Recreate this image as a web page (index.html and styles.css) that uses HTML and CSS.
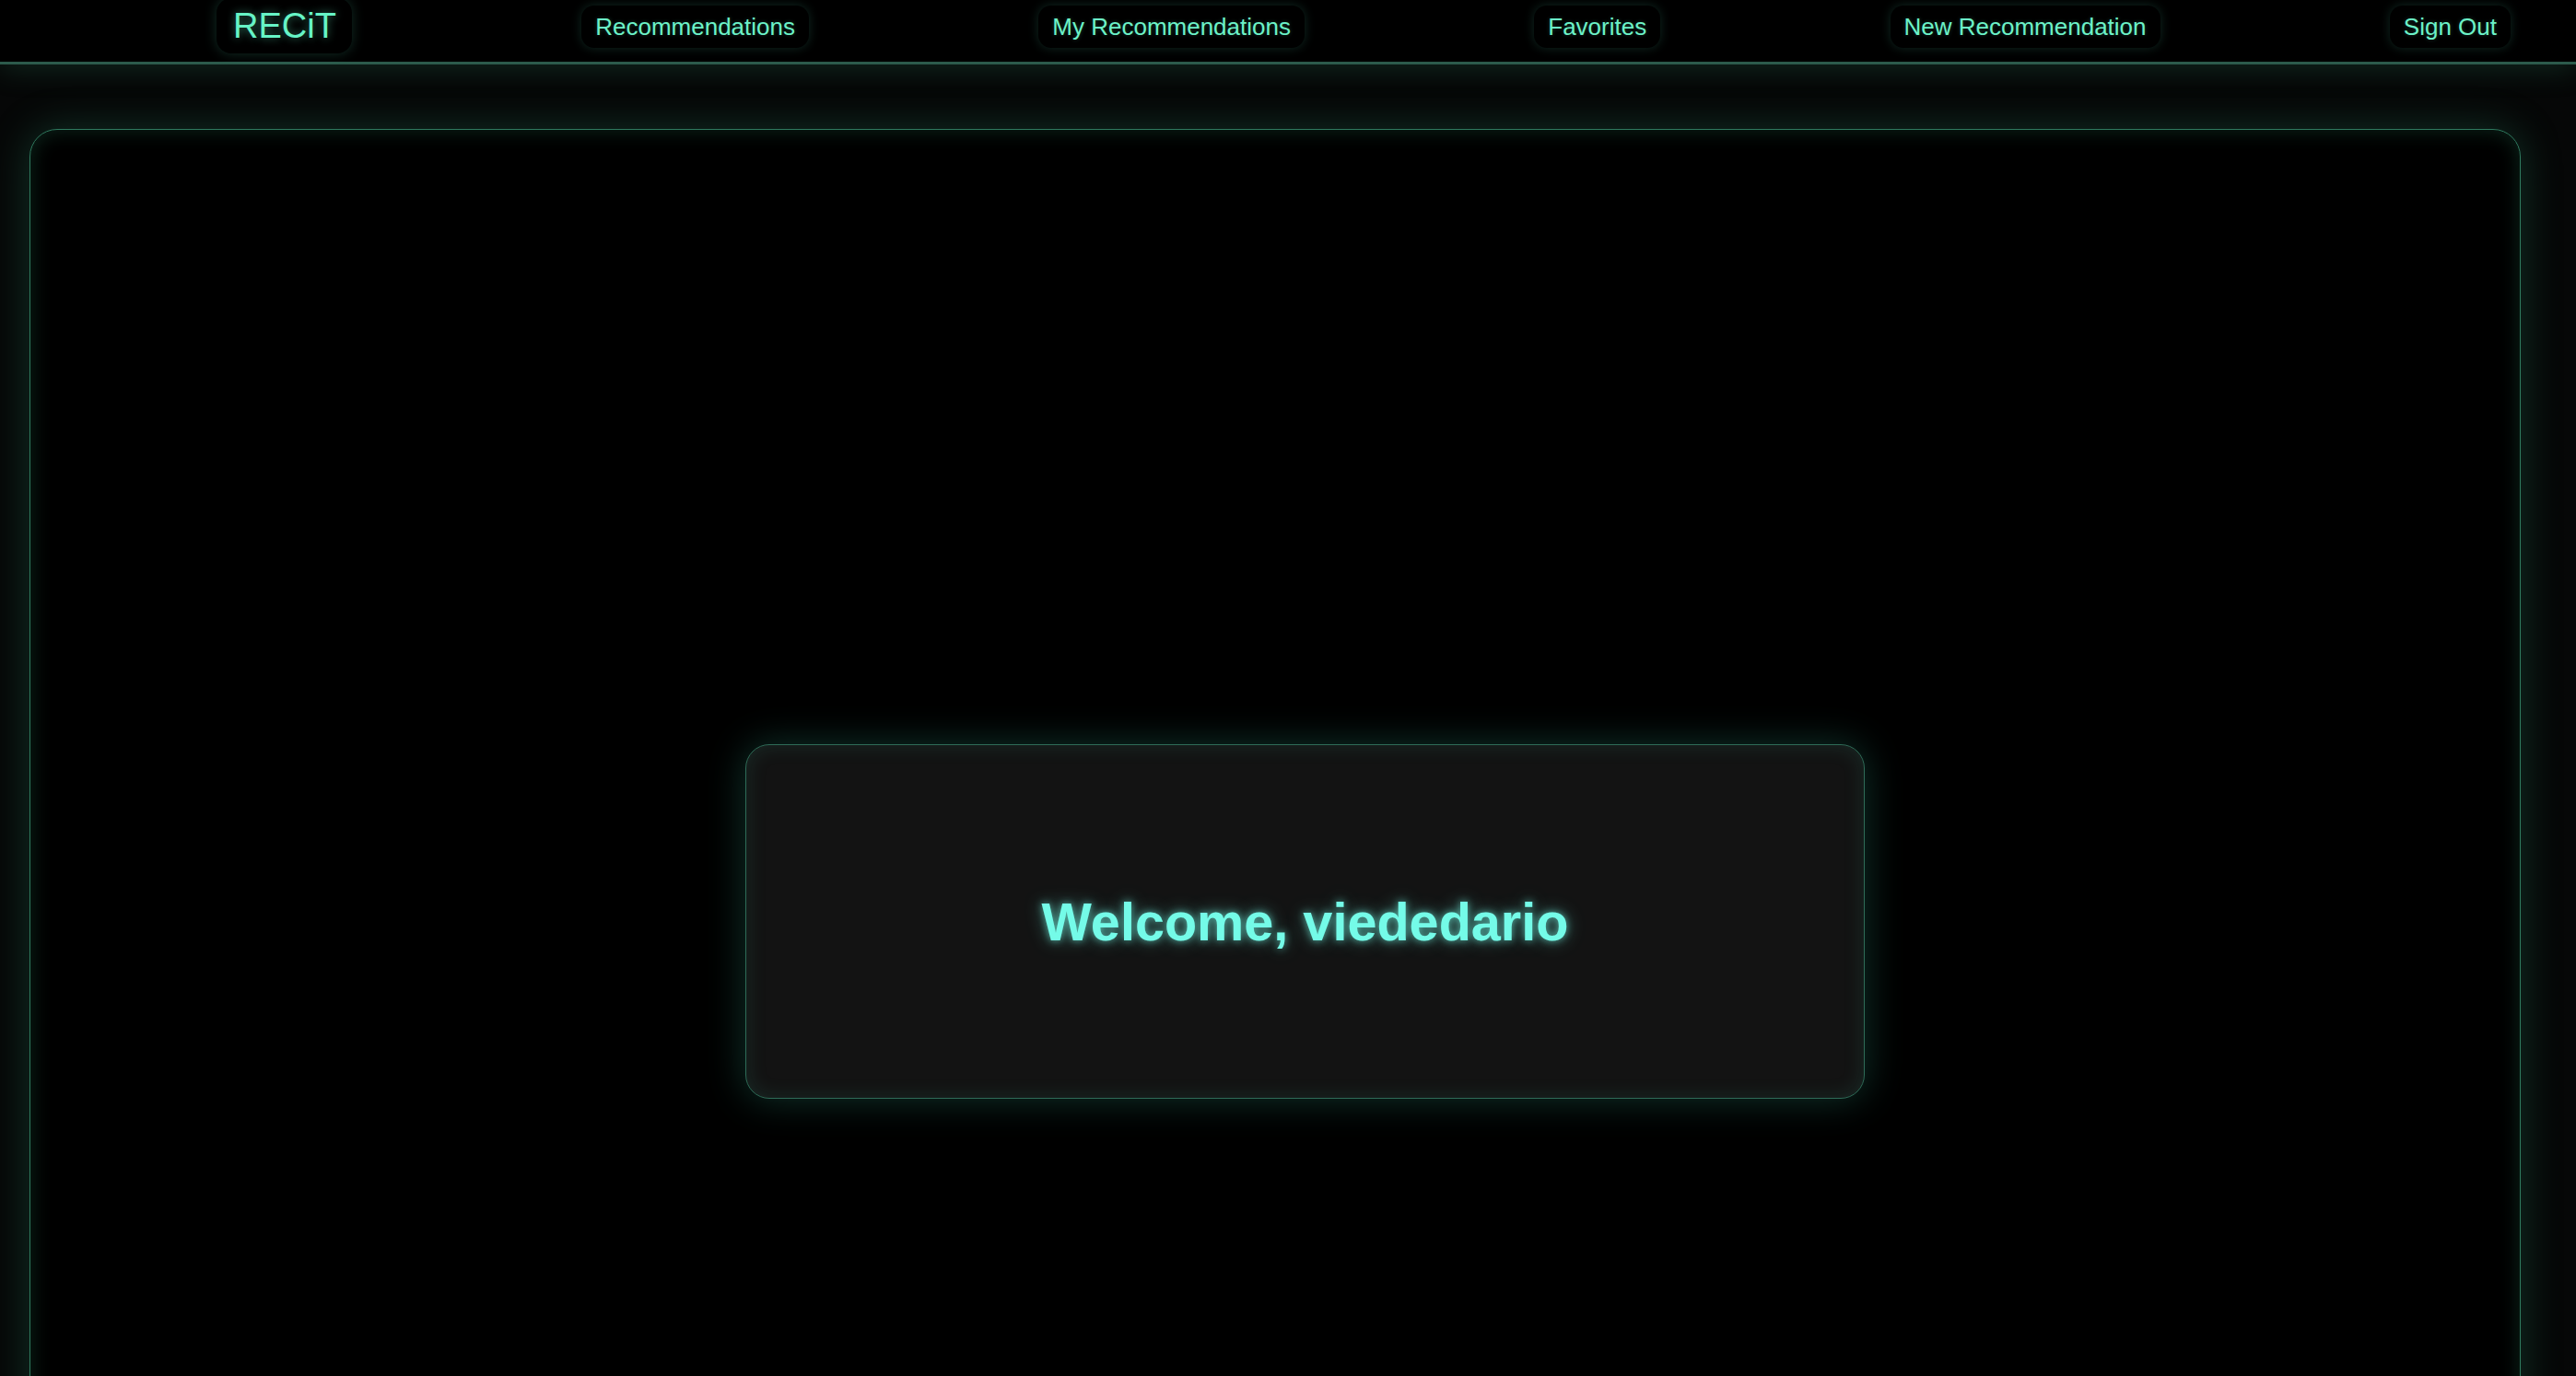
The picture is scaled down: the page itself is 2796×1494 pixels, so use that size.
FILE: index.html
```html
<!DOCTYPE html>
<html lang="en">
<head>
<meta charset="utf-8">
<title>RECiT</title>
<link rel="stylesheet" href="styles.css">
</head>
<body>
<header class="nav">
  <a class="logo">RECiT</a>
  <a class="nav-link">Recommendations</a>
  <a class="nav-link">My Recommendations</a>
  <a class="nav-link">Favorites</a>
  <a class="nav-link">New Recommendation</a>
  <a class="nav-link">Sign Out</a>
</header>
<main class="container">
  <section class="card">
    <h1 class="welcome">Welcome, viededario</h1>
  </section>
</main>
</body>
</html>
```
FILE: styles.css
```css
html, body {
  margin: 0;
  padding: 0;
}
body {
  background: #060707;
  font-family: "Liberation Sans", Arial, Helvetica, sans-serif;
  overflow: hidden;
  height: 1494px;
}
.nav {
  position: relative;
  z-index: 2;
  height: 67px;
  background: #000;
  border-bottom: 3px solid #2c5a4b;
  box-shadow: 0 6px 30px rgba(50, 140, 105, 0.22);
  display: flex;
  align-items: flex-start;
  justify-content: space-between;
  padding: 0 71px 0 235px;
}
.logo {
  margin-top: -2px;
  height: 60px;
  line-height: 60px;
  padding: 0 17px 0 18px;
  font-size: 38px;
  color: #66f4c6;
  background: #000;
  border-radius: 16px;
  box-shadow: 0 0 14px rgba(90, 230, 190, 0.2);
  text-shadow: 0 0 10px rgba(100, 240, 200, 0.5);
}
.nav-link {
  margin-top: 6px;
  height: 46px;
  line-height: 46px;
  padding: 0 15px;
  font-size: 26px;
  color: #6cf2c8;
  background: #000;
  border-radius: 14px;
  box-shadow: 0 0 12px rgba(90, 230, 190, 0.18);
  text-shadow: 0 0 4px rgba(100, 240, 200, 0.25);
}
.container {
  margin: 70px 60px 0 32px;
  height: 1720px;
  box-sizing: border-box;
  border: 1px solid #2f7a5f;
  border-radius: 30px;
  background: #000;
  box-shadow: 0 0 45px rgba(45, 140, 105, 0.32), inset 0 0 22px rgba(45, 140, 105, 0.28);
  display: flex;
  justify-content: center;
  align-items: flex-start;
  padding-left: 65px;
}
.card {
  margin-top: 667px;
  width: 1215px;
  height: 385px;
  box-sizing: border-box;
  background: #131313;
  border: 1px solid #2e6b57;
  border-radius: 26px;
  box-shadow: 0 0 40px rgba(60, 200, 170, 0.26), inset 0 0 22px rgba(60, 170, 140, 0.16);
  display: flex;
  align-items: center;
  justify-content: center;
}
.welcome {
  margin: 0;
  font-size: 57.6px;
  font-weight: 700;
  color: #74fbe8;
  text-shadow: 0 0 8px rgba(116, 251, 232, 0.65), 0 0 20px rgba(116, 251, 232, 0.4);
}
```
